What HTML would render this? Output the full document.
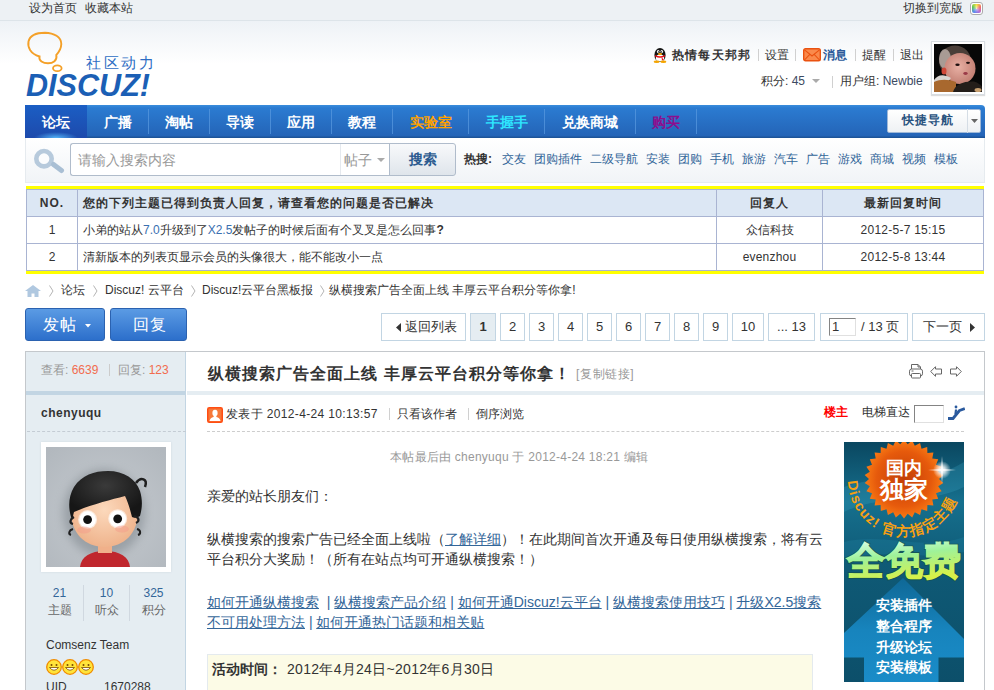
<!DOCTYPE html>
<html><head><meta charset="utf-8">
<style>
*{margin:0;padding:0;box-sizing:border-box}
html,body{width:994px;height:690px;overflow:hidden;background:#fff}
body{font-family:"Liberation Sans",sans-serif;font-size:12px;color:#333;position:relative}
.a{position:absolute;white-space:nowrap}
#bgtop{position:absolute;left:0;top:0;width:994px;height:105px;background:linear-gradient(#eef2f6 0,#eef2f6 21px,#fff 64px)}
#toptb{position:absolute;left:0;top:0;width:994px;height:21px;background:#edf1f4;border-bottom:1px solid #dde4e9}
.lk{color:#336699}
.pipe{position:absolute;width:1px;background:#d0d0d0}
/* nav */
#nv{position:absolute;left:25px;top:105px;width:960px;height:33px;background:linear-gradient(#3a8ddc 0,#2b7bd1 3px,#2464b7 31px,#1d5499 32px,#1d5499 33px);border-top-right-radius:4px}
#nv .it{position:absolute;top:0;height:33px;line-height:35px;font-size:14px;font-weight:bold;color:#fff;text-align:center}
#nv .sp{position:absolute;top:4px;width:1px;height:25px;background:#5a9ae0;opacity:.7}
#nv .on{background:radial-gradient(ellipse 22px 6px at 50% 100%,rgba(90,190,255,.9),rgba(90,190,255,0)),linear-gradient(#1b5ec4,#1d4aac)}
/* search */
#scbar{position:absolute;left:25px;top:138px;width:960px;height:45px;background:linear-gradient(#fff,#f1f4f7);border:1px solid #e6ebef;border-top:0}
/* notice table */
#ntb{position:absolute;left:26px;top:186px;width:958px;border-top:3px solid #ff0;border-bottom:3px solid #ff0}
#ntb table{border-collapse:collapse;width:958px}
#ntb td{border:1px solid #a9b4d2;height:27px;font-size:12px;color:#333;padding:0 5px}
#ntb tr.h td{background:#dce7f4;font-weight:bold;letter-spacing:1px}
/* buttons */
.bbtn{position:absolute;top:308px;height:33px;border:1px solid #2b62b0;border-radius:3px;background:linear-gradient(#5b9be4,#2c6fcb);color:#fff;font-size:16px;line-height:31px}
.pg{position:absolute;top:313px;height:28px;border:1px solid #c2d5e3;background:#fff;line-height:26px;font-size:13px;color:#333;text-align:center}
</style></head><body>
<div id="bgtop"></div>
<div id="toptb"></div>
<div class="a" style="left:29px;top:0;line-height:16px">设为首页</div><div class="a" style="left:85px;top:0;line-height:16px">收藏本站</div>
<div class="a" style="left:903px;top:0;line-height:16px">切换到宽版</div>
<div class="a" style="left:970px;top:2px;width:13px;height:13px;border:1px solid #aaa;border-radius:3px;background:#fff;padding:1px"><div style="width:9px;height:9px;border-radius:2px;background:radial-gradient(circle,rgba(255,255,255,.6),rgba(255,255,255,0) 60%),conic-gradient(#f4e040,#f06868,#b070d8,#5a8af0,#58c458,#f4e040)"></div></div>

<!-- logo -->
<svg class="a" style="left:0;top:0" width="170" height="104" viewBox="0 0 170 104">
 <path d="M39.5,56.5 C30,53.5 27.5,47 28.5,41.5 C30,35 37,32.7 45,32.7 C54,32.9 61.3,37 61.3,44 C61.2,49.5 58.5,52.5 56.3,55 C57.5,60.5 53,63.3 48,63.3 C43,63.3 38.5,60.5 39.5,56.5 Z" fill="none" stroke="#f4a028" stroke-width="1.9"/>
 <ellipse cx="57.3" cy="68.3" rx="4.3" ry="2.9" fill="none" stroke="#f4a028" stroke-width="1.8"/>
 <text x="86" y="68" font-family="Liberation Sans" font-size="15" fill="#2d6dc4" letter-spacing="2.6">社区动力</text>
 <text x="26" y="96" font-family="Liberation Sans" font-weight="bold" font-style="italic" font-size="30.5" fill="#1b5fb5" textLength="124" lengthAdjust="spacingAndGlyphs">DISCUZ!</text>
</svg>

<!-- user info -->
<svg class="a" style="left:652px;top:47px" width="16" height="16" viewBox="0 0 16 16"><ellipse cx="8" cy="8" rx="5.6" ry="7" fill="#151515"/><ellipse cx="8" cy="11" rx="4.2" ry="3.6" fill="#fff"/><ellipse cx="6.2" cy="4.6" rx="1.3" ry="1.6" fill="#fff"/><ellipse cx="9.8" cy="4.6" rx="1.3" ry="1.6" fill="#fff"/><circle cx="6.5" cy="4.9" r=".7" fill="#000"/><circle cx="9.5" cy="4.9" r=".7" fill="#000"/><ellipse cx="8" cy="6.9" rx="2.2" ry="1" fill="#f5a500"/><path d="M3,8 Q8,10.5 13,8 L13,9.5 Q8,12 3,9.5 Z M9.5,10 L12,13 L10,13.5 Z" fill="#e8101a"/><ellipse cx="4.6" cy="14.8" rx="3" ry="1.2" fill="#f5a500"/><ellipse cx="11.4" cy="14.8" rx="3" ry="1.2" fill="#f5a500"/></svg>
<div class="a" style="left:672px;top:47px;line-height:16px;font-weight:bold;letter-spacing:1.2px">热情每天邦邦</div>
<div class="pipe" style="left:758px;top:49px;height:12px"></div>
<div class="a" style="left:765px;top:47px;line-height:16px">设置</div>
<div class="pipe" style="left:795px;top:49px;height:12px"></div>
<svg class="a" style="left:803px;top:48px" width="18" height="14" viewBox="0 0 18 14"><rect x="0.7" y="0.7" width="16.6" height="12.1" rx="1.8" fill="#fa8a4c" stroke="#ea5210" stroke-width="1.4"/><path d="M1.5,1.8 L9,8 L16.5,1.8 M1.5,12 L6.8,6.3 M16.5,12 L11.2,6.3" stroke="#ea5210" stroke-width="1.1" fill="none"/></svg>
<div class="a" style="left:823px;top:47px;line-height:16px;font-weight:bold;color:#2b5a9a">消息</div>
<div class="pipe" style="left:855px;top:49px;height:12px"></div>
<div class="a" style="left:862px;top:47px;line-height:16px">提醒</div>
<div class="pipe" style="left:893px;top:49px;height:12px"></div>
<div class="a" style="left:900px;top:47px;line-height:16px">退出</div>
<div class="a" style="left:761px;top:73px;line-height:16px">积分: <span style="color:#3c4a62">45</span></div>
<svg class="a" style="left:812px;top:79px" width="8" height="5"><path d="M0,0 L8,0 L4,4 Z" fill="#aaa"/></svg>
<div class="pipe" style="left:832px;top:76px;height:12px"></div>
<div class="a" style="left:840px;top:73px;line-height:16px">用户组: <span style="color:#3c4a62">Newbie</span></div>
<div class="a" style="left:931px;top:41px;width:54px;height:54px;background:#fff;border:1px solid #d8dde2;box-shadow:0 1px 1px #ddd"></div>
<svg class="a" style="left:934px;top:44px" width="48" height="48" viewBox="0 0 48 48">
 <defs><radialGradient id="face" cx="45%" cy="45%" r="60%"><stop offset="0" stop-color="#e8b0a4"/><stop offset="1" stop-color="#c07c70"/></radialGradient></defs>
 <rect width="48" height="48" fill="#080808"/>
 <ellipse cx="21" cy="17" rx="16" ry="15.5" fill="#4a3e38"/>
 <ellipse cx="11" cy="15" rx="6" ry="10" fill="#b8aca4" opacity=".85"/>
 <ellipse cx="26" cy="24.5" rx="15.5" ry="15.5" fill="url(#face)"/>
 <ellipse cx="10" cy="27" rx="2.5" ry="3.5" fill="#d04838"/>
 <ellipse cx="23.5" cy="20.8" rx="2.2" ry="1.2" fill="#201010"/>
 <ellipse cx="34" cy="18.8" rx="2" ry="1.1" fill="#201010"/>
 <ellipse cx="31.5" cy="29.5" rx="2.2" ry="1.4" fill="#9a3a48"/>
 <path d="M0,36 C4,30 10,30 17,34 L13,39 C8,37 4,37 0,39 Z" fill="#d8d4d0"/>
 <path d="M0,48 L0,38 C6,35 14,35 22,38 L22,48 Z" fill="#a8682e"/>
 <path d="M19,48 C21,40 30,37 40,37.5 C44,38.5 47,41 48,43 L48,48 Z" fill="#241e1a"/>
 <ellipse cx="44" cy="46" rx="3.5" ry="2" fill="#c8a070"/>
</svg>

<!-- nav -->
<div id="nv">
 <div class="it on" style="left:0;width:62px">论坛</div>
 <div class="it" style="left:62px;width:61px">广播</div><div class="sp" style="left:123px"></div>
 <div class="it" style="left:124px;width:60px">淘帖</div><div class="sp" style="left:184px"></div>
 <div class="it" style="left:185px;width:60px">导读</div><div class="sp" style="left:245px"></div>
 <div class="it" style="left:246px;width:60px">应用</div><div class="sp" style="left:306px"></div>
 <div class="it" style="left:307px;width:60px">教程</div><div class="sp" style="left:367px"></div>
 <div class="it" style="left:368px;width:75px;color:#ffa200">实验室</div><div class="sp" style="left:443px"></div>
 <div class="it" style="left:444px;width:75px;color:#2ee6ff">手握手</div><div class="sp" style="left:519px"></div>
 <div class="it" style="left:520px;width:90px">兑换商城</div><div class="sp" style="left:610px"></div>
 <div class="it" style="left:611px;width:60px;color:#8b0f8f">购买</div><div class="sp" style="left:671px"></div>
 <div class="a" style="left:862px;top:4px;width:94px;height:24px;background:linear-gradient(#fff,#eef1f4);border:1px solid #9fb8d8;border-radius:2px"></div>
 <div class="a" style="left:862px;top:4px;width:81px;height:24px;line-height:22px;text-align:center;font-size:12px;font-weight:bold;color:#28527e;border-right:1px solid #d5dde5;letter-spacing:1px;padding-left:1px">快捷导航</div>
 <svg class="a" style="left:946px;top:14px" width="7" height="4"><path d="M0,0 L7,0 L3.5,4 Z" fill="#666"/></svg>
</div>

<!-- search -->
<div id="scbar"></div>
<svg class="a" style="left:32px;top:147px" width="34" height="28" viewBox="0 0 34 28"><circle cx="12" cy="11.7" r="7.7" fill="#fbfcfd" stroke="#b7cadc" stroke-width="4.6"/><path d="M21.5,17.5 L29.5,23.5" stroke="#a9bfd4" stroke-width="5" stroke-linecap="round"/></svg>
<div class="a" style="left:70px;top:143px;width:320px;height:33px;border:1px solid #b0bccb;border-right:0;border-radius:3px 0 0 3px;background:#fff"></div>
<div class="a" style="left:78px;top:150px;line-height:20px;font-size:14px;color:#999">请输入搜索内容</div>
<div class="a" style="left:340px;top:144px;width:1px;height:31px;background:#e5e9ee"></div>
<div class="a" style="left:344px;top:150px;line-height:20px;font-size:14px;color:#999">帖子</div>
<svg class="a" style="left:377px;top:158px" width="8" height="5"><path d="M0,0 L8,0 L4,4 Z" fill="#aaa"/></svg>
<div class="a" style="left:389px;top:143px;width:67px;height:33px;border:1px solid #b0bccb;border-radius:0 3px 3px 0;background:linear-gradient(#f8f9fb,#dfe5eb);line-height:31px;text-align:center;font-size:14px;font-weight:bold;color:#2b5a8f">搜索</div>
<div class="a" style="left:464px;top:150px;line-height:18px;font-weight:bold">热搜:</div>
<div class="a lk" style="left:502px;top:150px;line-height:18px"><span style="margin-right:8px">交友</span><span style="margin-right:8px">团购插件</span><span style="margin-right:8px">二级导航</span><span style="margin-right:8px">安装</span><span style="margin-right:8px">团购</span><span style="margin-right:8px">手机</span><span style="margin-right:8px">旅游</span><span style="margin-right:8px">汽车</span><span style="margin-right:8px">广告</span><span style="margin-right:8px">游戏</span><span style="margin-right:8px">商城</span><span style="margin-right:8px">视频</span><span style="margin-right:8px">模板</span></div>

<!-- notice table -->
<div id="ntb"><table>
<tr class="h"><td style="width:51px;text-align:center">NO.</td><td>您的下列主题已得到负责人回复，请查看您的问题是否已解决</td><td style="width:106px;text-align:center">回复人</td><td style="width:161px;text-align:center">最新回复时间</td></tr>
<tr><td style="text-align:center">1</td><td>小弟的站从<span style="color:#3a6fb0">7.0</span>升级到了<span style="color:#3a6fb0">X2.5</span>发帖子的时候后面有个叉叉是怎么回事<b>?</b></td><td style="text-align:center">众信科技</td><td style="text-align:center;letter-spacing:.25px">2012-5-7 15:15</td></tr>
<tr><td style="text-align:center">2</td><td>清新版本的列表页显示会员的头像很大，能不能改小一点</td><td style="text-align:center;letter-spacing:.2px">evenzhou</td><td style="text-align:center;letter-spacing:.25px">2012-5-8 13:44</td></tr>
</table></div>

<!-- breadcrumb -->
<svg class="a" style="left:25px;top:285px" width="16" height="12" viewBox="0 0 16 12"><path d="M8,0 L16,6 L13.5,6 L13.5,12 L9.5,12 L9.5,8.5 L6.5,8.5 L6.5,12 L2.5,12 L2.5,6 L0,6 Z" fill="#b0c8e0"/></svg>
<svg class="a" style="left:49px;top:285px" width="5" height="12"><path d="M0.5,0.5 L4,6 L0.5,11.5" fill="none" stroke="#b4b4b4" stroke-width="1"/></svg><svg class="a" style="left:93px;top:285px" width="5" height="12"><path d="M0.5,0.5 L4,6 L0.5,11.5" fill="none" stroke="#b4b4b4" stroke-width="1"/></svg><svg class="a" style="left:191px;top:285px" width="5" height="12"><path d="M0.5,0.5 L4,6 L0.5,11.5" fill="none" stroke="#b4b4b4" stroke-width="1"/></svg><svg class="a" style="left:320px;top:285px" width="5" height="12"><path d="M0.5,0.5 L4,6 L0.5,11.5" fill="none" stroke="#b4b4b4" stroke-width="1"/></svg>
<div class="a" style="left:61px;top:282px;line-height:16px">论坛</div>
<div class="a" style="left:105px;top:282px;line-height:16px">Discuz! 云平台</div>
<div class="a" style="left:202px;top:282px;line-height:16px">Discuz!云平台黑板报</div>
<div class="a" style="left:329px;top:282px;line-height:16px">纵横搜索广告全面上线 丰厚云平台积分等你拿!</div>
<!-- buttons -->
<div class="bbtn" style="left:25px;width:80px"><span style="position:absolute;left:17px;letter-spacing:1px;font-weight:500">发帖</span><svg style="position:absolute;left:59px;top:15px" width="6" height="4"><path d="M0,0 L6,0 L3,3.5 Z" fill="#fff"/></svg></div>
<div class="bbtn" style="left:110px;width:77px;text-align:center;letter-spacing:1px;font-weight:500;padding-left:2px">回复</div>

<!-- pagination -->
<div class="pg" style="left:381px;width:85px"><svg style="position:absolute;left:14px;top:9px" width="5" height="9"><path d="M5,0 L5,9 L0,4.5 Z" fill="#333"/></svg><span style="position:absolute;left:23px">返回列表</span></div>
<div class="pg" style="left:470px;width:26px;background:#e5edf2;font-weight:bold">1</div>
<div class="pg" style="left:500px;width:25px">2</div>
<div class="pg" style="left:529px;width:25px">3</div>
<div class="pg" style="left:558px;width:25px">4</div>
<div class="pg" style="left:587px;width:25px">5</div>
<div class="pg" style="left:616px;width:25px">6</div>
<div class="pg" style="left:645px;width:25px">7</div>
<div class="pg" style="left:674px;width:25px">8</div>
<div class="pg" style="left:703px;width:25px">9</div>
<div class="pg" style="left:732px;width:32px">10</div>
<div class="pg" style="left:768px;width:47px">... 13</div>
<div class="pg" style="left:820px;width:88px"><div style="position:absolute;left:8px;top:4px;width:27px;height:18px;border:1px solid #999;border-color:#848484 #e0e0e0 #e0e0e0 #848484;text-align:left;line-height:16px;padding-left:2px">1</div><span style="position:absolute;left:40px">/ 13 页</span></div>
<div class="pg" style="left:912px;width:73px"><span style="position:absolute;left:10px">下一页</span><svg style="position:absolute;left:57px;top:9px" width="5" height="9"><path d="M0,0 L5,4.5 L0,9 Z" fill="#333"/></svg></div>

<!-- post table -->
<div class="a" style="left:25px;top:351px;width:960px;height:339px;border:1px solid #c4c8cc;border-bottom:0;background:#fff"></div>
<div class="a" style="left:26px;top:352px;width:160px;height:338px;background:#e5edf2;border-right:1px solid #c2d5e3"></div>
<div class="a" style="left:26px;top:391px;width:160px;height:4px;background:#c2d5e3"></div>
<div class="a" style="left:187px;top:391px;width:797px;height:4px;background:#e5edf2"></div>
<div class="a" style="left:41px;top:362px;line-height:16px;color:#999">查看: <span style="color:#f26c4f">6639</span></div>
<div class="pipe" style="left:109px;top:364px;height:12px;background:#ccc"></div>
<div class="a" style="left:118px;top:362px;line-height:16px;color:#999">回复: <span style="color:#f26c4f">123</span></div>
<div class="a" style="left:208px;top:363px;line-height:22px;font-size:16px;font-weight:bold;color:#333;letter-spacing:1.05px">纵横搜索广告全面上线 丰厚云平台积分等你拿！</div>
<div class="a" style="left:576px;top:366px;line-height:16px;color:#999;letter-spacing:.6px">[复制链接]</div>

<!-- post header icons -->
<svg class="a" style="left:909px;top:364px" width="15" height="15" viewBox="0 0 15 15"><path d="M2.5,5 V0.5 H9 L11.5,3 V5" fill="#fff" stroke="#666" stroke-width="1"/><path d="M9,0.5 V3 H11.5" fill="none" stroke="#666" stroke-width="1"/><rect x="0.5" y="5" width="13" height="7" rx="2.2" fill="#fff" stroke="#666" stroke-width="1"/><rect x="2.5" y="9.5" width="9" height="4.5" rx=".8" fill="#fff" stroke="#666" stroke-width="1"/><path d="M2.5,7 H4.5" stroke="#666" stroke-width="1"/></svg>
<svg class="a" style="left:930px;top:366px" width="12" height="11" viewBox="0 0 12 11"><path d="M0.7,5.5 L5.5,0.7 L5.5,3 L11.5,3 L11.5,8 L5.5,8 L5.5,10.3 Z" fill="#fff" stroke="#666" stroke-width="1"/></svg>
<svg class="a" style="left:950px;top:366px" width="12" height="11" viewBox="0 0 12 11"><path d="M11.3,5.5 L6.5,0.7 L6.5,3 L0.5,3 L0.5,8 L6.5,8 L6.5,10.3 Z" fill="#fff" stroke="#666" stroke-width="1"/></svg>
<!-- author -->
<div class="a" style="left:41px;top:405px;line-height:16px;font-weight:bold;color:#333;letter-spacing:.5px">chenyuqu</div>
<div class="a" style="left:27px;top:431px;width:159px;height:1px;border-top:1px dashed #c4ccd4"></div>
<div class="a" style="left:41px;top:442px;width:130px;height:130px;background:#fff;box-shadow:0 0 2px #cdd6de"></div>
<svg class="a" style="left:46px;top:447px" width="120" height="120" viewBox="0 0 120 120">
 <defs>
  <radialGradient id="abg" cx="50%" cy="55%" r="70%"><stop offset="0" stop-color="#c6cbd0"/><stop offset="1" stop-color="#b2b8be"/></radialGradient>
  <radialGradient id="skin" cx="50%" cy="45%" r="60%"><stop offset="0" stop-color="#fcd9bc"/><stop offset="1" stop-color="#eeb088"/></radialGradient>
  <radialGradient id="hairg" cx="50%" cy="30%" r="60%"><stop offset="0" stop-color="#3a3a3a"/><stop offset="1" stop-color="#161616"/></radialGradient>
  <filter id="blur"><feGaussianBlur stdDeviation="5"/></filter>
 </defs>
 <rect width="120" height="120" fill="url(#abg)"/>
 <ellipse cx="58" cy="66" rx="41" ry="44" fill="#7d848a" opacity=".55" filter="url(#blur)"/>
 <path d="M34,120 C35,110 44,104 59,104 C74,104 83,110 84,120 Z" fill="#c0272d"/>
 <rect x="52" y="96" width="14" height="10" fill="#f0b08a"/>
 <path d="M25,65 C25,45 40,32 58.5,32 C77,32 92,45 92,65 C92,86 78,100 58.5,100 C39,100 25,86 25,65 Z" fill="url(#skin)"/>
 <path d="M26,73 C22,62 22,50 28,40 C36,28 48,24 62,24 C78,24 90,32 94,44 C97,54 96,62 94,69 C91,71 88,71 86,70 C84,62 82,55 79,49 C64,53 44,58 28,65 C27,68 27,71 26,73 Z" fill="url(#hairg)"/>
 <path d="M90,36 C95,29 102,32 99,40" fill="none" stroke="#1f1f1f" stroke-width="2.5"/>
 <path d="M28,70 C24,72 23,76 27,77" fill="none" stroke="#1f1f1f" stroke-width="2.2"/>
 <path d="M88,69 C93,70 94,74 90,76" fill="none" stroke="#1f1f1f" stroke-width="2.2"/>
 <path d="M27,82 C23,83 22,87 25,88" fill="none" stroke="#1f1f1f" stroke-width="2"/>
 <path d="M91,82 C95,83 95,87 92,88" fill="none" stroke="#1f1f1f" stroke-width="2"/>
 <circle cx="41.6" cy="72.6" r="9.5" fill="#fff" opacity=".6"/><circle cx="41.6" cy="72.6" r="8.3" fill="#fff"/><circle cx="41.6" cy="72.6" r="4.4" fill="#111"/>
 <circle cx="71.7" cy="71.8" r="9.5" fill="#fff" opacity=".6"/><circle cx="71.7" cy="71.8" r="8.3" fill="#fff"/><circle cx="71.7" cy="71.8" r="4.4" fill="#111"/>
 <ellipse cx="38" cy="83" rx="7" ry="3.5" fill="#f59a8a" opacity=".45"/><ellipse cx="76" cy="82" rx="7" ry="3.5" fill="#f59a8a" opacity=".45"/>
</svg>
<div class="a" style="left:36px;top:586px;width:47px;text-align:center;line-height:15px;color:#336699">21</div>
<div class="a" style="left:36px;top:602px;width:47px;text-align:center;line-height:16px;color:#666">主题</div>
<div class="a" style="left:83px;top:585px;width:1px;height:36px;background:#d0d8e0"></div>
<div class="a" style="left:83px;top:586px;width:47px;text-align:center;line-height:15px;color:#336699">10</div>
<div class="a" style="left:83px;top:602px;width:47px;text-align:center;line-height:16px;color:#666">听众</div>
<div class="a" style="left:129px;top:585px;width:1px;height:36px;background:#d0d8e0"></div>
<div class="a" style="left:130px;top:586px;width:47px;text-align:center;line-height:15px;color:#336699">325</div>
<div class="a" style="left:130px;top:602px;width:47px;text-align:center;line-height:16px;color:#666">积分</div>
<div class="a" style="left:46px;top:637px;line-height:16px;color:#333">Comsenz Team</div>
<svg class="a" style="left:46px;top:659px" width="48" height="16" viewBox="0 0 48 16">
 <g id="sm"><circle cx="8" cy="8" r="7.3" fill="#ffe43a" stroke="#f08c00" stroke-width="1.3"/><circle cx="5.5" cy="6" r="1" fill="#7a4a00"/><circle cx="10.5" cy="6" r="1" fill="#7a4a00"/><path d="M3.5,8.5 Q8,14 12.5,8.5 Z" fill="#fff" stroke="#7a4a00" stroke-width=".8"/></g>
 <use href="#sm" x="16"/><use href="#sm" x="32"/>
</svg>
<div class="a" style="left:46px;top:679px;line-height:16px;color:#333">UID</div>
<div class="a" style="left:104px;top:679px;line-height:16px;color:#333">1670288</div>

<!-- post meta -->
<svg class="a" style="left:207px;top:407px" width="16" height="16" viewBox="0 0 16 16"><rect x="0.75" y="0.75" width="14.5" height="14.5" rx="1.5" fill="#f6783a" stroke="#ff4d12" stroke-width="1.5"/><ellipse cx="8" cy="6" rx="2.6" ry="3.3" fill="#fff"/><path d="M7,8.5 L9,8.5 L9.5,10 C11.5,10.5 13,11.5 13.5,14 L2.5,14 C3,11.5 4.5,10.5 6.5,10 Z" fill="#fff"/></svg>
<div class="a" style="left:226px;top:406px;line-height:16px;color:#333;letter-spacing:.35px">发表于 2012-4-24 10:13:57</div>
<div class="pipe" style="left:389px;top:408px;height:12px"></div>
<div class="a" style="left:397px;top:406px;line-height:16px;color:#333">只看该作者</div>
<div class="pipe" style="left:468px;top:408px;height:12px"></div>
<div class="a" style="left:476px;top:406px;line-height:16px;color:#333">倒序浏览</div>
<div class="a" style="left:824px;top:404px;line-height:16px;font-weight:bold;color:#f00">楼主</div>
<div class="a" style="left:862px;top:404px;line-height:16px;color:#333">电梯直达</div>
<div class="a" style="left:914px;top:405px;width:30px;height:18px;border:1px solid;border-color:#848484 #e0e0e0 #e0e0e0 #848484;background:#fff"></div>
<svg class="a" style="left:948px;top:405px" width="17" height="16" viewBox="0 0 17 16"><circle cx="8" cy="2" r="1.4" fill="#2a5a9e"/><path d="M1,13.5 L5,13.5 L11.5,5.5 L15.5,4" fill="none" stroke="#2a5a9e" stroke-width="2.8" stroke-linejoin="round" stroke-linecap="square"/><path d="M8,4.5 L7.5,9" stroke="#2a5a9e" stroke-width="2.2"/></svg>
<div class="a" style="left:207px;top:431px;width:757px;height:1px;border-top:1px dashed #cdcdcd"></div>

<!-- content -->
<div class="a" style="left:390px;top:449px;line-height:16px;color:#999;letter-spacing:.25px">本帖最后由 chenyuqu 于 2012-4-24 18:21 编辑</div>
<div class="a" style="left:207px;top:486px;line-height:20px;font-size:14px;color:#333">亲爱的站长朋友们：</div>
<div class="a" style="left:207px;top:529px;line-height:20px;font-size:14px;color:#333">纵横搜索的搜索广告已经全面上线啦（<span style="color:#336699;text-decoration:underline">了解详细</span>）！在此期间首次开通及每日使用纵横搜索，将有云<br>平台积分大奖励！（所有在站点均可开通纵横搜索！）</div>
<div class="a" style="left:207px;top:592px;line-height:20px;font-size:14px;color:#336699"><u>如何开通纵横搜索</u> &nbsp;| <u>纵横搜索产品介绍</u> | <u>如何开通Discuz!云平台</u> | <u>纵横搜索使用技巧</u> | <u>升级X2.5搜索</u><br><u>不可用处理方法</u> | <u>如何开通热门话题和相关贴</u></div>
<div class="a" style="left:207px;top:654px;width:606px;height:40px;background:#fcfbe6;border:1px solid #e4eaee"></div>
<div class="a" style="left:212px;top:659px;line-height:21px;font-size:14px;color:#333;font-weight:bold">活动时间：</div><div class="a" style="left:287px;top:659px;line-height:21px;font-size:14px;color:#333;letter-spacing:.3px">2012年4月24日~2012年6月30日</div>

<!-- ad -->
<svg class="a" style="left:844px;top:442px" width="120" height="240" viewBox="0 0 120 240">
 <defs>
  <linearGradient id="adbg" x1="0" y1="0" x2="0" y2="1"><stop offset="0" stop-color="#0a4760"/><stop offset=".25" stop-color="#16708e"/><stop offset=".5" stop-color="#0f5a76"/><stop offset="1" stop-color="#0c4f6a"/></linearGradient>
  <radialGradient id="sun" cx="50%" cy="50%" r="50%"><stop offset="0" stop-color="#c23e06"/><stop offset=".7" stop-color="#e65a0c"/><stop offset="1" stop-color="#f87a14"/></radialGradient>
  <linearGradient id="qmf" x1="0" y1="0" x2="0.3" y2="1"><stop offset="0" stop-color="#e0fff0"/><stop offset=".45" stop-color="#9ef29a"/><stop offset="1" stop-color="#d8f048"/></linearGradient>
  <linearGradient id="arr" x1="0" y1="0" x2="0" y2="1"><stop offset="0" stop-color="#0f6896"/><stop offset=".5" stop-color="#1784bd"/><stop offset="1" stop-color="#1a8cc8"/></linearGradient>
  <radialGradient id="flare" cx="50%" cy="50%" r="50%"><stop offset="0" stop-color="#fff"/><stop offset=".35" stop-color="#fff" stop-opacity=".8"/><stop offset="1" stop-color="#fff" stop-opacity="0"/></radialGradient>
  <path id="arc" d="M 4,38 A 56,56 0 0 0 116,38"/>
 </defs>
 <rect width="120" height="240" fill="url(#adbg)"/>
 <path d="M0,45 C40,30 80,45 120,20 L120,45 C80,65 40,50 0,70 Z" fill="#3aa8c8" opacity=".25"/>
 <path d="M0,100 C40,90 80,110 120,95 L120,110 C80,120 40,105 0,118 Z" fill="#2a98b8" opacity=".2"/>
 <path d="M59,136 L120,197 L120,215.5 L94.5,215.5 L94.5,240 L20,240 L20,215.5 L0,215.5 L0,191 Z" fill="url(#arr)"/>
 <polygon transform="translate(0,-3)" fill="url(#sun)" points="60.0,0.5 63.7,5.2 68.2,1.4 70.8,6.7 76.1,3.9 77.5,9.7 83.2,8.0 83.4,14.0 89.4,13.6 88.3,19.4 94.2,20.2 92.0,25.8 97.6,27.8 94.2,32.7 99.3,35.9 95.0,40.0 99.3,44.1 94.2,47.3 97.6,52.2 92.0,54.2 94.2,59.7 88.3,60.6 89.4,66.4 83.4,66.0 83.2,72.0 77.5,70.3 76.1,76.1 70.8,73.3 68.2,78.6 63.7,74.8 60.0,79.5 56.3,74.8 51.8,78.6 49.2,73.3 43.9,76.1 42.5,70.3 36.8,72.0 36.6,66.0 30.6,66.4 31.7,60.6 25.8,59.8 28.0,54.2 22.4,52.2 25.8,47.3 20.7,44.1 25.0,40.0 20.7,35.9 25.8,32.7 22.4,27.8 28.0,25.8 25.8,20.2 31.7,19.4 30.6,13.6 36.6,14.0 36.8,8.0 42.5,9.7 43.9,3.9 49.2,6.7 51.8,1.4 56.3,5.2"/>
 <circle cx="98" cy="28" r="9" fill="url(#flare)"/>
 <path d="M98,14 L99,27 L112,28 L99,29 L98,42 L97,29 L84,28 L97,27 Z" fill="#fff" opacity=".8"/>
 <text x="60" y="32" text-anchor="middle" font-family="Liberation Sans" font-weight="bold" font-size="18" fill="#fff">国内</text>
 <text x="60" y="56" text-anchor="middle" font-family="Liberation Sans" font-weight="bold" font-size="24" fill="#fff">独家</text>
 <text font-family="Liberation Sans" font-weight="bold" font-size="14" fill="#f8a012"><textPath href="#arc" startOffset="1" letter-spacing="1.2">Discuz! 官方指定主题</textPath></text>
 <text x="60" y="132" text-anchor="middle" font-family="Liberation Sans" font-weight="900" font-size="38" fill="#184a3a" stroke="#184a3a" stroke-width="3" opacity=".6">全免费</text><text x="60" y="132" text-anchor="middle" font-family="Liberation Sans" font-weight="900" font-size="38" fill="url(#qmf)" stroke="url(#qmf)" stroke-width="1.3">全免费</text>
 <g font-family="Liberation Sans" font-weight="bold" font-size="13.5" fill="#fff" text-anchor="middle">
  <text x="60" y="168">安装插件</text><text x="60" y="189">整合程序</text><text x="60" y="210">升级论坛</text><text x="60" y="230">安装模板</text>
 </g>
</svg>
</body></html>
